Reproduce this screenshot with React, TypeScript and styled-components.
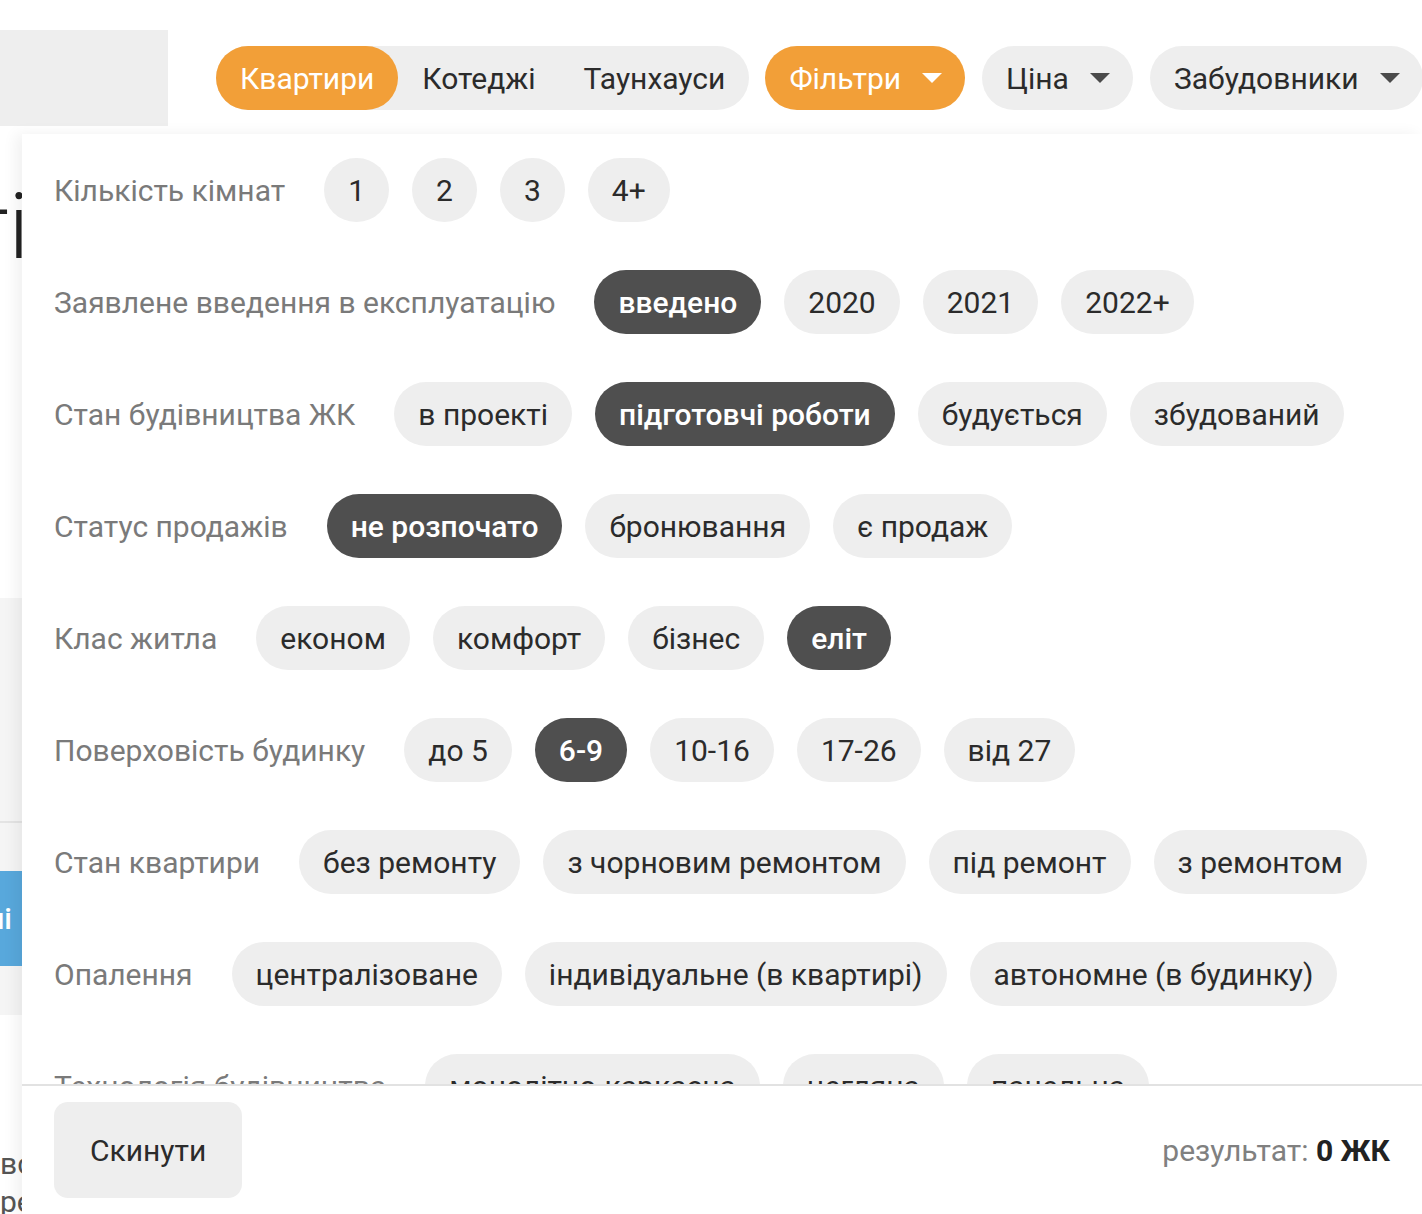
import React from 'react';
import styled, { createGlobalStyle } from 'styled-components';

const GlobalStyle = createGlobalStyle`
  html, body {
    margin: 0;
    padding: 0;
    background: #fff;
    font-family: Roboto, "Noto Sans", "Liberation Sans", sans-serif;
    color: #333;
    overflow: hidden;
  }
  * { box-sizing: border-box; }
`;

const Page = styled.div`
  position: relative;
  width: 1422px;
  height: 1214px;
  overflow: hidden;
`;

const Header = styled.header`
  display: flex;
  align-items: center;
  padding-top: 30px;
  & > * { flex-shrink: 0; }
`;

const Logo = styled.div`
  width: 168px;
  height: 96px;
  background: #eeeeee;
  margin-right: 48px;
`;

const Tabs = styled.div`
  display: flex;
  height: 64px;
  border-radius: 32px;
  background: #eeeeee;
  margin-right: 16px;
`;

const Tab = styled.div<{ $active?: boolean }>`
  display: flex;
  align-items: center;
  height: 64px;
  padding: 0 24px;
  border-radius: 32px;
  font-size: 30px;
  background: ${(p) => (p.$active ? '#f29f38' : 'transparent')};
  color: ${(p) => (p.$active ? '#fff' : '#2b2b2b')};
`;

const DropButton = styled.div<{ $active?: boolean }>`
  display: flex;
  align-items: center;
  gap: 20px;
  height: 64px;
  padding: 0 22px 0 24px;
  margin-right: 17px;
  border-radius: 32px;
  font-size: 30px;
  white-space: nowrap;
  background: ${(p) => (p.$active ? '#f29f38' : '#eeeeee')};
  color: ${(p) => (p.$active ? '#fff' : '#2b2b2b')};
`;

const Caret = ({ color }: { color: string }) => (
  <svg width="22" height="12" viewBox="0 0 22 12">
    <path d="M1 1h20L11 11z" fill={color} />
  </svg>
);

/* background page, only a strip of it shows beside the dropdown */
const Strip = styled.div`
  width: 22px;
  overflow: hidden;
  display: flex;
  flex-direction: column;
`;

const Heading = styled.div`
  display: flex;
  justify-content: flex-end;
  margin-top: 52px;
  height: 100px;
  font-size: 90px;
  font-weight: 300;
  line-height: 100px;
  color: #222;
  white-space: nowrap;
  span { margin-right: -7px; }
`;

const GreyBlock = styled.div`
  margin-top: 320px;
  height: 417px;
  background: #f5f5f5;
  display: flex;
  flex-direction: column;
`;

const Divider = styled.div`
  margin-top: 223px;
  height: 2px;
  background: #e4e4e4;
`;

const BlueButton = styled.div`
  margin-top: 48px;
  height: 95px;
  background: #58a8dc;
  color: #fff;
  font-size: 30px;
  font-weight: 500;
  display: flex;
  align-items: center;
  justify-content: flex-end;
  padding-right: 10px;
  white-space: nowrap;
`;

const StripTexts = styled.div`
  margin-top: 130px;
`;

const StripText = styled.div`
  font-size: 30px;
  line-height: 38px;
  color: #555;
  white-space: nowrap;
`;

const Panel = styled.div`
  position: absolute;
  top: 134px;
  left: 22px;
  right: 0;
  bottom: 0;
  background: #fff;
  box-shadow: -6px 0 14px rgba(0, 0, 0, 0.06);
  display: flex;
  flex-direction: column;
`;

const Scroll = styled.div`
  flex: 1;
  overflow: hidden;
  padding: 24px 32px 0;
  display: flex;
  flex-direction: column;
  gap: 48px;
`;

const Row = styled.div`
  display: flex;
  align-items: center;
  flex-shrink: 0;
  gap: 23px;
`;

const Label = styled.div`
  font-size: 30px;
  color: #7a7a7a;
  margin-right: 16px;
  white-space: nowrap;
`;

const Chip = styled.div<{ $active?: boolean }>`
  display: flex;
  align-items: center;
  height: 64px;
  padding: 0 24px;
  border-radius: 32px;
  font-size: 30px;
  white-space: nowrap;
  background: ${(p) => (p.$active ? '#4f4f4f' : '#eeeeee')};
  color: ${(p) => (p.$active ? '#fff' : '#2b2b2b')};
  font-weight: ${(p) => (p.$active ? 500 : 400)};
`;

const Footer = styled.div`
  border-top: 2px solid #e2e2e2;
  padding: 16px 32px;
  display: flex;
  align-items: center;
  justify-content: space-between;
`;

const ResetButton = styled.div`
  height: 96px;
  padding: 0 36px;
  border-radius: 14px;
  background: #eeeeee;
  display: flex;
  align-items: center;
  font-size: 30px;
  color: #2b2b2b;
`;

const Result = styled.div`
  font-size: 30px;
  color: #808080;
  b {
    color: #222;
    font-weight: 700;
  }
`;

const rows: { label: string; chips: string[]; active?: string[] }[] = [
  { label: 'Кількість кімнат', chips: ['1', '2', '3', '4+'] },
  { label: 'Заявлене введення в експлуатацію', chips: ['введено', '2020', '2021', '2022+'], active: ['введено'] },
  { label: 'Стан будівництва ЖК', chips: ['в проекті', 'підготовчі роботи', 'будується', 'збудований'], active: ['підготовчі роботи'] },
  { label: 'Статус продажів', chips: ['не розпочато', 'бронювання', 'є продаж'], active: ['не розпочато'] },
  { label: 'Клас житла', chips: ['економ', 'комфорт', 'бізнес', 'еліт'], active: ['еліт'] },
  { label: 'Поверховість будинку', chips: ['до 5', '6-9', '10-16', '17-26', 'від 27'], active: ['6-9'] },
  { label: 'Стан квартири', chips: ['без ремонту', 'з чорновим ремонтом', 'під ремонт', 'з ремонтом'] },
  { label: 'Опалення', chips: ['централізоване', 'індивідуальне (в квартирі)', 'автономне (в будинку)'] },
  { label: 'Технологія будівництва', chips: ['монолітно-каркасна', 'цегляна', 'панельна'] },
];

export default function App() {
  return (
    <Page>
      <GlobalStyle />
      <Header>
        <Logo />
        <Tabs>
          <Tab $active>Квартири</Tab>
          <Tab>Котеджі</Tab>
          <Tab>Таунхауси</Tab>
        </Tabs>
        <DropButton $active>
          Фільтри
          <Caret color="#fff" />
        </DropButton>
        <DropButton>
          Ціна
          <Caret color="#4a4a4a" />
        </DropButton>
        <DropButton>
          Забудовники
          <Caret color="#4a4a4a" />
        </DropButton>
      </Header>

      <Strip>
        <Heading>
          <span>Новобудови Києва ті</span>
        </Heading>
        <GreyBlock>
          <Divider />
          <BlueButton>Додати в обрані</BlueButton>
        </GreyBlock>
        <StripTexts>
          <StripText>все</StripText>
          <StripText>ре</StripText>
        </StripTexts>
      </Strip>

      <Panel>
        <Scroll>
          {rows.map((row) => (
            <Row key={row.label}>
              <Label>{row.label}</Label>
              {row.chips.map((c) => (
                <Chip key={c} $active={row.active?.includes(c)}>
                  {c}
                </Chip>
              ))}
            </Row>
          ))}
        </Scroll>
        <Footer>
          <ResetButton>Скинути</ResetButton>
          <Result>
            результат: <b>0 ЖК</b>
          </Result>
        </Footer>
      </Panel>
    </Page>
  );
}
